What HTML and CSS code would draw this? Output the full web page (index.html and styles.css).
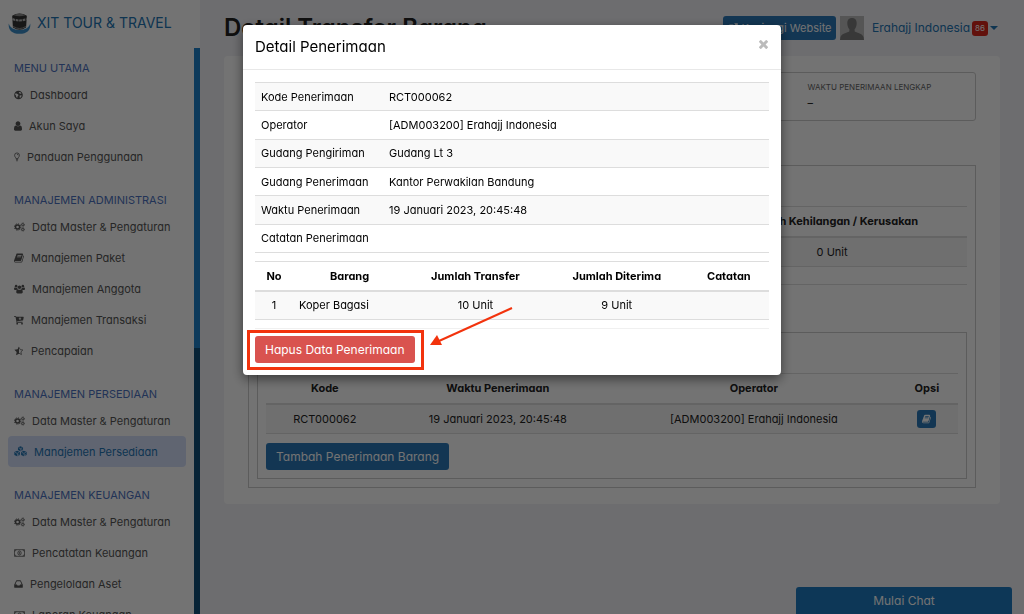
FILE: index.html
```html
<!DOCTYPE html>
<html lang="id">
<head>
<meta charset="utf-8">
<meta name="viewport" content="width=device-width, initial-scale=1">
<title>Detail Transfer Barang</title>
<link rel="stylesheet" href="styles.css">
</head>
<body>
<svg class="sprite" aria-hidden="true">
  <symbol id="globe" viewBox="0 0 14 14"><path fill-rule="evenodd" d="M7 .3a6.700 6.700 0 1 0 0 13.400A6.700 6.700 0 0 0 7 .3zM8.200 2.200l2 .4 1.500 2-1.200.6-1.800-.4-1.300-1.300zM2 4.600l2 .2 2.600 1.600.3 1.400-1.500 1.400-.2 2.400-1.800-1.500-.4-2.400-1.400-1.500zM8.700 7.800l2.400-.4.9.8-1.500 2.600-1.600.5z"/></symbol>
  <symbol id="user" viewBox="256 128 1280 1536"><path d="M1536 1399q0 109-62.5 187t-150.5 78h-854q-88 0-150.5-78t-62.5-187q0-85 8.5-160.5t31.5-152 58.5-131 94-89 134.5-34.5q131 128 313 128t313-128q76 0 134.5 34.5t94 89 58.5 131 31.5 152 8.5 160.5zm-256-887q0 159-112.5 271.5t-271.5 112.500-271.500-112.500-112.500-271.500 112.500-271.500 271.500-112.500 271.500 112.500 112.500 271.500z"/></symbol>
  <symbol id="bulb" viewBox="0 0 10 15"><path fill="none" stroke="currentColor" stroke-width="1.300" d="M3.300 10.200C3.300 8.300 1 7.400 1 4.700a4 4 0 0 1 8 0c0 2.700-2.300 3.600-2.300 5.500zM3.200 12h3.600M3.800 13.800h2.400M5 3q1.800.1 1.900 1.700"/></symbol>
  <symbol id="cogs" viewBox="0 0 17 14"><circle cx="5.500" cy="7" r="3.100" fill="none" stroke="currentColor" stroke-width="2.200"/><circle cx="5.500" cy="7" r="4.900" fill="none" stroke="currentColor" stroke-width="1.500" stroke-dasharray="2 1.850"/><circle cx="13.600" cy="3.400" r="1.700" fill="none" stroke="currentColor" stroke-width="1.300"/><circle cx="13.600" cy="3.400" r="2.800" fill="none" stroke="currentColor" stroke-width="1" stroke-dasharray="1.400 1.100"/><circle cx="13.600" cy="10.700" r="1.700" fill="none" stroke="currentColor" stroke-width="1.300"/><circle cx="13.600" cy="10.700" r="2.800" fill="none" stroke="currentColor" stroke-width="1" stroke-dasharray="1.400 1.100"/></symbol>
  <symbol id="book" viewBox="64 128 1664 1536"><path d="M1703 478q40 57 18 129l-275 906q-19 64-76.5 107.5t-122.5 43.5h-923q-77 0-148.5-53.5t-99.5-131.5q-24-67-2-127 0-4 3-27t4-37q1-8-3-21.5t-3-19.5q2-11 8-21t16.5-23.5 16.5-23.5q23-38 45-91.5t30-91.5q3-10 .5-30t-.5-28q3-11 17-28t17-23q21-36 42-92t25-90q1-9-2.5-32t.5-28q4-13 22-30.5t22-22.5q19-26 42.5-84.5t27.5-96.5q1-8-3-25.5t-2-26.5q2-8 9-18t18-23 17-21q8-12 16.5-30.5t15-35 16-36 19.5-32 26.5-23.5 36-11.5 47.5 5.5l-1 3q38-9 51-9h761q74 0 114 56t18 130l-274 906q-36 119-71.5 153.5t-128.5 34.5h-869q-27 0-38 15-11 16-1 43 24 70 144 70h923q29 0 56-15.5t35-41.5l300-987q7-22 5-57 38 15 59 43zm-1064 2q-4 13 2 22.5t20 9.5h608q13 0 25.5-9.5t16.5-22.5l21-64q4-13-2-22.5t-20-9.5h-608q-13 0-25.5 9.5t-16.5 22.5zm-83 256q-4 13 2 22.5t20 9.5h608q13 0 25.5-9.5t16.5-22.5l21-64q4-13-2-22.5t-20-9.5h-608q-13 0-25.5 9.5t-16.5 22.5z"/></symbol>
  <symbol id="external" viewBox="0 0 14 14"><path fill="none" stroke="currentColor" stroke-width="1.600" d="M7.500 2.800H2.800Q1 2.800 1 4.500v6.700Q1 13 2.800 13h6.700q1.700 0 1.700-1.800V8"/><path d="M8.500.3h5.200v5.200L12 3.800 7 8.800 5.200 7l5-5z"/></symbol>
  <symbol id="users" viewBox="0 0 17 14"><circle cx="3.300" cy="2.600" r="2"/><circle cx="13.700" cy="2.600" r="2"/><circle cx="8.500" cy="4.400" r="2.700"/><path d="M1.500 4.700Q3.300 6 5 4.900q.2 1.600 1 2.400-1.500.1-2.400 1.200H1.500Q0 8.500 0 7q0-2.300 1.500-2.300zM15.500 4.700Q13.700 6 12 4.900q-.2 1.600-1 2.400 1.500.1 2.400 1.200h2.100Q17 8.500 17 7q0-2.300-1.500-2.300zM5.600 7.200q2.900 2 5.800 0 2.200.3 2.200 4.600 0 2.200-2 2.200H5.400q-2 0-2-2.200 0-4.300 2.200-4.600z"/></symbol>
  <symbol id="cart" viewBox="0 0 15 14"><path fill-rule="evenodd" d="M0 1h2.500q.6 0 .7.800l.1.500H14q.7 0 .6.700l-.9 4.300q-.1.500-.7.600l-8.500 1 .2.900h8.100v1.200H4q-.7 0-.6-.7l.3-.8L2.200 2.200H0zM8.200 3.300v1.500H6.800l2.200 2.200 2.200-2.200H9.800V3.300z"/><circle cx="4.800" cy="12.600" r="1.300"/><circle cx="12" cy="12.600" r="1.300"/></symbol>
  <symbol id="star" viewBox="0 0 14 14"><path d="M7 .6v10.100L2.900 12.900l.8-4.500L.5 5.200l4.500-.6z"/><path fill="none" stroke="currentColor" d="M7 1.700l1.700 3.400 3.700.5-2.700 2.600.7 3.800L7 10.100"/></symbol>
  <symbol id="cubes" viewBox="0 0 18 15"><path d="M9 .3l3.500 1.500v3.600L9 7.100 5.500 5.400V1.800zM4.400 6.400l3.800 1.700v4.100l-3.800 2-3.900-2V8.100zM13.600 6.400l3.900 1.700v4.100l-3.900 2-3.800-2V8.100z"/><path class="cube-lines" d="M6.300 2.300L9 3.500l2.700-1.200M9.300 3.700v2.500l2.300-1.100M1.500 8.700l2.900 1.400 2.900-1.400M4.800 10.400v2.700l2.500-1.300M10.700 8.700l2.900 1.400 2.900-1.400M14 10.400v2.700l2.500-1.300"/></symbol>
  <symbol id="money" viewBox="0 0 17 12"><path fill="none" stroke="currentColor" stroke-width="1.200" d="M.6.900h15.800v10.200H.6zM3.200.9Q3 3 .6 3.300M13.800.9q.2 2.100 2.600 2.400M3.200 11.100Q3 9 .6 8.700M13.800 11.100q.2-2.100 2.600-2.400"/><ellipse cx="8.500" cy="6" rx="2.600" ry="3.200" fill="none" stroke="currentColor" stroke-width="1.200"/><path d="M7.300 4.500L8.300 4H9v3h.8v.8H7.400V7h.8V5.100l-.7.200z"/></symbol>
  <symbol id="inbox" viewBox="0 0 14 12"><path fill-rule="evenodd" d="M3.300.8q.2-.6.800-.6h5.800q.6 0 .8.600l3 6.200v4.200q0 .6-.6.600H.9q-.6 0-.6-.6V7zM4.300 1.900L2.100 6.700h2.500l.8 1.700h3.200l.8-1.700h2.500L9.700 1.900z"/></symbol>
  <symbol id="times" viewBox="302 238 1188 1316"><path d="M1490 1322q0 40-28 68l-136 136q-28 28-68 28t-68-28l-294-294-294 294q-28 28-68 28t-68-28l-136-136q-28-28-28-68t28-68l294-294-294-294q-28-28-28-68t28-68l136-136q28-28 68-28t68 28l294 294 294-294q28-28 68-28t68 28l136 136q28 28 28 68t-28 68l-294 294 294 294q28 28 28 68z"/></symbol>
</svg>

<div class="app">
  <aside class="sidebar">
    <a class="brand" href="#">
      <svg class="logo" viewBox="0 0 24 24" aria-hidden="true">
        <path fill="#3d8fca" d="M.2 12.500Q-.5 23.600 12 23.800q12.500-.2 11.800-11.300-1.800 6.700-11.800 7-10-.3-11.800-7z"/>
        <path fill="#333" d="M4 4.200Q12-1 20 4.200L19.200 17q-7.200 4.800-14.400 0z"/>
        <path fill="#8c8c8c" d="M5.500 3.600q6.500-3.200 13 0-6.500 2-13 0z"/>
        <path fill="none" stroke="#bbb" stroke-width="2.200" stroke-dasharray="3 .8" d="M4.200 7.700q7.800 3 15.600 0"/>
        <path fill="none" stroke="#999" stroke-width="1" d="M5 15.800q7 4.400 14 0"/>
      </svg>
      <span>XIT TOUR &amp; TRAVEL</span>
    </a>
    <div class="side-body">
      <nav class="nav">
        <section class="group">
          <h2 class="group-title">MENU UTAMA</h2>
          <a class="item" href="#"><svg class="w9"><use href="#globe"/></svg>Dashboard</a>
          <a class="item" href="#"><svg class="w8"><use href="#user"/></svg>Akun Saya</a>
          <a class="item" href="#"><svg class="w6"><use href="#bulb"/></svg>Panduan Penggunaan</a>
        </section>
        <section class="group">
          <h2 class="group-title">MANAJEMEN ADMINISTRASI</h2>
          <a class="item" href="#"><svg class="w11"><use href="#cogs"/></svg>Data Master &amp; Pengaturan</a>
          <a class="item" href="#"><svg class="w10"><use href="#book"/></svg>Manajemen Paket</a>
          <a class="item" href="#"><svg class="w11"><use href="#users"/></svg>Manajemen Anggota</a>
          <a class="item" href="#"><svg class="w10"><use href="#cart"/></svg>Manajemen Transaksi</a>
          <a class="item" href="#"><svg class="w10"><use href="#star"/></svg>Pencapaian</a>
        </section>
        <section class="group">
          <h2 class="group-title">MANAJEMEN PERSEDIAAN</h2>
          <a class="item" href="#"><svg class="w11"><use href="#cogs"/></svg>Data Master &amp; Pengaturan</a>
          <a class="item active" href="#" aria-current="page"><svg class="w13"><use href="#cubes"/></svg>Manajemen Persediaan</a>
        </section>
        <section class="group">
          <h2 class="group-title">MANAJEMEN KEUANGAN</h2>
          <a class="item" href="#"><svg class="w11"><use href="#cogs"/></svg>Data Master &amp; Pengaturan</a>
          <a class="item" href="#"><svg class="w11"><use href="#money"/></svg>Pencatatan Keuangan</a>
          <a class="item" href="#"><svg class="w9"><use href="#inbox"/></svg>Pengelolaan Aset</a>
          <a class="item" href="#"><svg class="w11"><use href="#money"/></svg>Laporan Keuangan</a>
        </section>
      </nav>
      <div class="track"><div class="thumb"></div></div>
    </div>
  </aside>

  <main class="main">
    <header class="topbar">
      <h1>Detail Transfer Barang</h1>
      <a class="btn visit" href="#"><svg class="w10"><use href="#external"/></svg>Kunjungi Website</a>
      <svg class="avatar" viewBox="0 0 24 24" aria-hidden="true"><path fill="#bdbdbd" d="M0 0h24v24H0z"/><path fill="#7c7c7c" d="M12 2c3.200 0 4.800 2.200 4.700 5.300 0 2.600-.9 4.700-2.100 6l.1 2.200c3 1.600 7.300 1.800 8.800 5.500l.5 3H0l.5-3c1.500-3.700 5.800-3.900 8.800-5.500l.1-2.200c-1.200-1.300-2.100-3.400-2.100-6C7.200 4.200 8.800 2 12 2z"/></svg>
      <a class="account" href="#">Erahajj Indonesia <span class="badge">86</span><span class="caret"></span></a>
    </header>

    <div class="card">
      <dl class="info">
        <div class="info-last"><dt>WAKTU PENERIMAAN LENGKAP</dt><dd>–</dd></div>
      </dl>
      <section class="panel">
        <div class="panel-head"></div>
        <table class="grid loss">
          <thead><tr><th></th><th>Jumlah Kehilangan / Kerusakan</th></tr></thead>
          <tbody><tr><td></td><td>0 Unit</td></tr></tbody>
        </table>
        <div class="rule"></div>
        <section class="subpanel">
          <div class="panel-head"></div>
          <table class="grid receipts">
            <thead><tr><th>Kode</th><th>Waktu Penerimaan</th><th>Operator</th><th>Opsi</th></tr></thead>
            <tbody><tr><td>RCT000062</td><td>19 Januari 2023, 20:45:48</td><td>[ADM003200] Erahajj Indonesia</td><td><button class="btn icon-btn" type="button" aria-label="Detail"><svg class="w9"><use href="#book"/></svg></button></td></tr></tbody>
          </table>
          <button class="btn large" type="button">Tambah Penerimaan Barang</button>
        </section>
      </section>
    </div>
  </main>
</div>

<button class="chat" type="button">Mulai Chat</button>

<div class="overlay">
  <div class="modal" role="dialog" aria-modal="true" aria-labelledby="modal-title">
    <header class="modal-head">
      <h2 id="modal-title">Detail Penerimaan</h2>
      <button class="close" type="button" aria-label="Tutup"><svg class="w9"><use href="#times"/></svg></button>
    </header>
    <div class="modal-body">
      <table class="details">
        <tbody>
          <tr><th scope="row">Kode Penerimaan</th><td>RCT000062</td></tr>
          <tr><th scope="row">Operator</th><td>[ADM003200] Erahajj Indonesia</td></tr>
          <tr><th scope="row">Gudang Pengiriman</th><td>Gudang Lt 3</td></tr>
          <tr><th scope="row">Gudang Penerimaan</th><td>Kantor Perwakilan Bandung</td></tr>
          <tr><th scope="row">Waktu Penerimaan</th><td>19 Januari 2023, 20:45:48</td></tr>
          <tr><th scope="row">Catatan Penerimaan</th><td></td></tr>
        </tbody>
      </table>
      <table class="grid goods">
        <thead><tr><th>No</th><th>Barang</th><th>Jumlah Transfer</th><th>Jumlah Diterima</th><th>Catatan</th></tr></thead>
        <tbody><tr><td>1</td><td>Koper Bagasi</td><td>10 Unit</td><td>9 Unit</td><td></td></tr></tbody>
      </table>
      <footer class="modal-foot">
        <div class="marked">
          <button class="btn large danger" type="button">Hapus Data Penerimaan</button>
          <span class="mark-box"></span>
          <svg class="mark-arrow" viewBox="0 0 84 42" aria-hidden="true"><path stroke="#f2330d" stroke-width="2" d="M83 2L10 35"/><path fill="#f2330d" d="M1 39l7-10 5 10z"/></svg>
        </div>
      </footer>
    </div>
  </div>
</div>
</body>
</html>
```

FILE: styles.css
```css
* { box-sizing: border-box; }

body {
  margin: 0;
  height: 100vh;
  overflow: hidden;
  background: #f1f1f6;
  color: #222;
  font-family: Inter, "Liberation Sans", sans-serif;
  font-feature-settings: "cv11";
  font-size: 11px;
  line-height: 16px;
}

h1, h2, dl, dd { margin: 0; }
a { color: inherit; text-decoration: none; }
button { font: inherit; font-feature-settings: inherit; cursor: pointer; }
svg { fill: currentColor; flex: none; }
.sprite { position: absolute; width: 0; height: 0; }

.w6 { width: 6px; height: 10px; }
.w8 { width: 8px; height: 10px; }
.w9 { width: 9px; height: 10px; }
.w10 { width: 10px; height: 10px; }
.w11 { width: 11px; height: 10px; }
.w13 { width: 13px; height: 11px; }

.app { display: flex; height: 100%; }

/* Sidebar */
.sidebar {
  flex: none;
  width: 200px;
  display: flex;
  flex-direction: column;
  background: #fff;
}
.brand {
  flex: none;
  display: flex;
  align-items: center;
  gap: 6px;
  height: 48px;
  padding: 0 8px 2px;
  color: #2375b4;
  font-size: 14px;
}
.logo { width: 23px; height: 22px; }
.side-body { flex: 1; min-height: 0; display: flex; }
.nav { flex: 1; overflow: hidden; padding: 9px 8px 0; }
.group { margin-bottom: 17px; }
.group-title {
  padding: 0 6px;
  color: #4d72c0;
  font-size: 11px;
  font-weight: 400;
  line-height: 22px;
  white-space: nowrap;
}
.item {
  display: flex;
  align-items: center;
  gap: 7px;
  height: 31px;
  padding: 0 6px;
  border-radius: 4px;
  color: #555;
  white-space: nowrap;
}
.item.active { background: #d5e0fb; color: #2375b4; }
.cube-lines { fill: none; stroke: #d5e0fb; stroke-width: 1px; }
.track { width: 6px; background: #104e78; }
.thumb { height: 300px; background: #1d82c9; }

/* Page */
.main { flex: 1; min-width: 0; padding: 0 24px; }
.topbar {
  display: flex;
  align-items: center;
  gap: 4px;
  height: 56px;
}
.topbar h1 { flex: 1; font-size: 24px; font-weight: 600; white-space: nowrap; }
.btn {
  display: inline-flex;
  align-items: center;
  justify-content: center;
  gap: 4px;
  border: 0;
  border-radius: 3px;
  background: #2b79b8;
  color: #fff;
}
.visit { width: 113px; height: 24px; white-space: nowrap; }
.avatar { width: 24px; height: 24px; }
.account {
  display: flex;
  align-items: center;
  gap: 2px;
  padding: 0 2px 0 4px;
  color: #2375b4;
  font-size: 12px;
  white-space: nowrap;
}
.badge {
  padding: 0 3px;
  border-radius: 3px;
  background: #d9261c;
  color: #fff;
  font-size: 8px;
  line-height: 15px;
}
.caret {
  border: 4px solid transparent;
  border-top-color: #2375b4;
  border-bottom: 0;
}
.card { padding: 16px 24px; border-radius: 4px; background: #fff; }
.info {
  display: grid;
  grid-template-columns: repeat(4, 1fr);
  border: 1px solid #ccc;
  border-radius: 3px;
}
.info-last { grid-column: 4; padding: 6px 14px 9px; }
.info dt { color: #666; font-size: 8px; white-space: nowrap; }
.info dd { font-size: 11px; }
.panel { margin-top: 44px; padding: 8px; border: 1px solid #ccc; }
.panel-head { height: 32px; }
.rule { height: 48px; margin-top: 17px; border-top: 1px solid #ddd; }
.subpanel { padding: 8px; border: 1px solid #ccc; }

/* Tables */
table { width: 100%; border-collapse: collapse; table-layout: fixed; }
th, td { padding: 0 6px; white-space: nowrap; }
.grid { text-align: center; }
.grid th { height: 30px; border-top: 1px solid #ddd; border-bottom: 2px solid #ddd; font-weight: 700; }
.grid td { height: 30px; border-bottom: 1px solid #ddd; background: #f6f6f6; }
.loss th:last-child { width: 38%; }
.receipts th:nth-child(1) { width: 17%; }
.receipts th:nth-child(2) { width: 33%; }
.receipts th:nth-child(3) { width: 41%; }
.receipts { margin-bottom: 9px; }
.icon-btn { width: 19px; height: 18px; padding: 0; vertical-align: middle; }
.large { height: 27px; padding: 0 10px; font-size: 12px; white-space: nowrap; }

.chat {
  position: fixed;
  right: 12px;
  bottom: 0;
  width: 216px;
  height: 27px;
  border: 0;
  border-radius: 3px 3px 0 0;
  background: #1d7ac0;
  color: #fff;
  font-size: 12px;
}

/* Dialog */
.overlay {
  position: fixed;
  inset: 0;
  display: flex;
  align-items: flex-start;
  justify-content: center;
  padding: 25px 12px;
  background: rgba(0, 0, 0, .55);
}
.modal {
  width: 538px;
  border-radius: 4px;
  background: #fff;
  color: #000;
  box-shadow: 0 4px 12px rgba(0, 0, 0, .5);
}
.modal-head {
  display: flex;
  align-items: center;
  justify-content: space-between;
  height: 45px;
  padding: 0 12px;
  border-bottom: 1px solid #e8e8e8;
}
.modal-head h2 { font-size: 15px; font-weight: 400; }
.close { display: flex; padding: 0 1px 6px; border: 0; background: none; color: #bbb; }
.modal-body { padding: 12px; }
.details { height: 171px; text-align: left; }
.details th { width: 128px; font-weight: 400; }
.details th, .details td { border-top: 1px solid #ddd; border-bottom: 1px solid #ddd; }
.details tr:nth-child(odd) { background: #f9f9f9; }
.goods { margin-top: 8px; }
.goods th { height: 29px; }
.goods td { height: 29px; background: #f9f9f9; }
.goods th:nth-child(1) { width: 38px; }
.goods th:nth-child(2) { width: 22%; }
.goods th:nth-child(3) { width: 27%; }
.goods th:nth-child(4) { width: 28%; }
.goods td:nth-child(2) { text-align: left; }
.modal-foot { margin-top: 8px; padding-top: 7px; border-top: 1px solid #f0f0f0; }
.marked { position: relative; width: fit-content; }
.marked .btn { display: flex; }
.danger { background: #d9534f; }
.mark-box { position: absolute; inset: -6px -9px -7px -8px; border: 3px solid #f2330d; pointer-events: none; }
.mark-arrow { position: absolute; left: calc(100% + 14px); bottom: 15px; width: 84px; height: 42px; }
```
